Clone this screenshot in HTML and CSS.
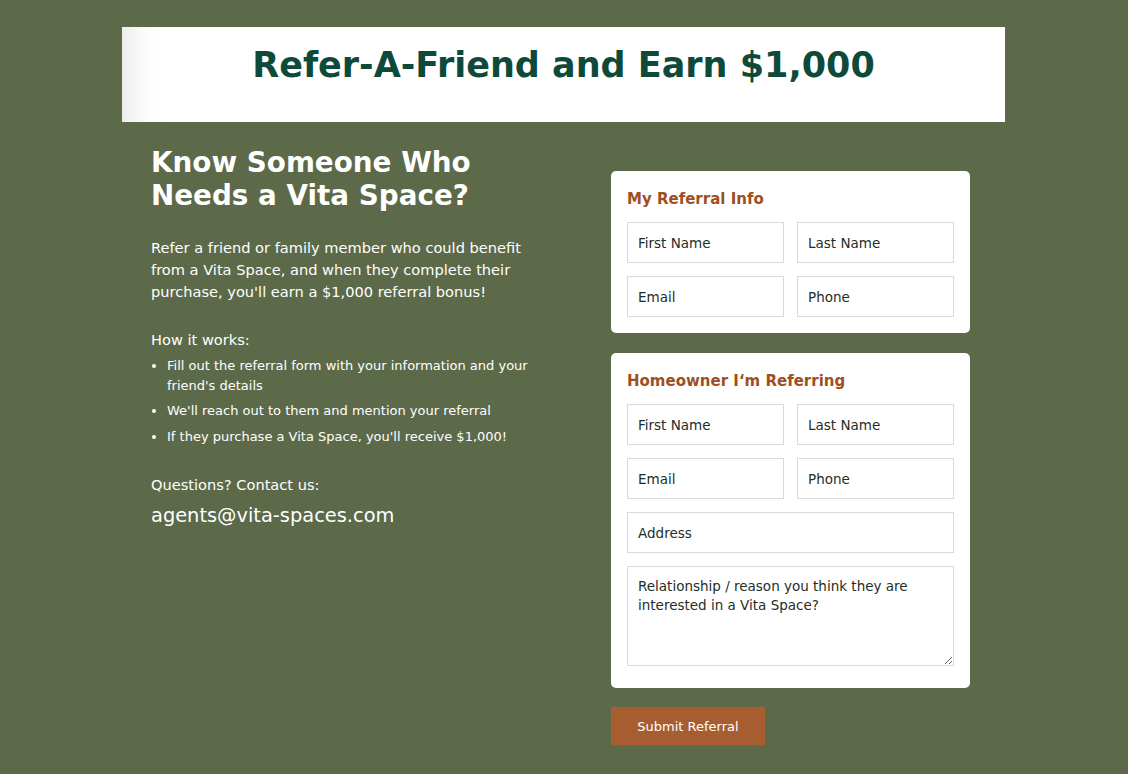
FILE: index.html
```html
<!DOCTYPE html>
<html>
<head>
<meta charset="utf-8">
<link rel="stylesheet" href="styles.css">
</head>
<body>
<div class="page">
  <header class="banner">
    <h1>Refer-A-Friend and Earn $1,000</h1>
  </header>
  <main class="content">
    <section class="intro">
      <h2>Know Someone Who Needs a Vita Space?</h2>
      <p class="lead">Refer a friend or family member who could benefit from a Vita Space, and when they complete their purchase, you'll earn a $1,000 referral bonus!</p>
      <p class="how">How it works:</p>
      <ul class="steps">
        <li>Fill out the referral form with your information and your friend's details</li>
        <li>We'll reach out to them and mention your referral</li>
        <li>If they purchase a Vita Space, you'll receive $1,000!</li>
      </ul>
      <p class="questions">Questions? Contact us:</p>
      <p class="email">agents@vita-spaces.com</p>
    </section>
    <form class="form">
      <div class="card">
        <h3>My Referral Info</h3>
        <div class="grid">
          <input class="field" type="text" placeholder="First Name">
          <input class="field" type="text" placeholder="Last Name">
          <input class="field" type="text" placeholder="Email">
          <input class="field" type="text" placeholder="Phone">
        </div>
      </div>
      <div class="card">
        <h3>Homeowner I‘m Referring</h3>
        <div class="grid">
          <input class="field" type="text" placeholder="First Name">
          <input class="field" type="text" placeholder="Last Name">
          <input class="field" type="text" placeholder="Email">
          <input class="field" type="text" placeholder="Phone">
          <input class="field wide" type="text" placeholder="Address">
          <textarea class="field wide area" placeholder="Relationship / reason you think they are interested in a Vita Space?"></textarea>
        </div>
      </div>
      <button class="submit" type="button">Submit Referral</button>
    </form>
  </main>
</div>
</body>
</html>
```

FILE: styles.css
```css
html, body {
  margin: 0;
  padding: 0;
  background: #5c6a4a;
}
body {
  font-family: "DejaVu Sans", "Noto Sans", sans-serif;
  color: #ffffff;
}
.page {
  width: 883px;
  margin: 0 0 0 122px;
  padding-top: 27px;
}
.banner {
  background: #ffffff;
  height: 95px;
  box-shadow: inset 34px 0 30px -26px rgba(0,0,0,0.10);
  display: flex;
  justify-content: center;
}
.banner h1 {
  margin: 14px 0 0 0;
  font-size: 35px;
  font-weight: 600;
  color: #0d4a3a;
  letter-spacing: 0;
  line-height: 48px;
}
.content {
  display: flex;
  justify-content: space-between;
  padding: 24px 35px 0 29px;
}
.intro {
  width: 400px;
}
.intro h2 {
  margin: 0;
  font-size: 27.8px;
  font-weight: 600;
  line-height: 33px;
  width: 340px;
}
.lead {
  margin: 25px 0 0 0;
  font-size: 14.6px;
  line-height: 22px;
}
.how {
  margin: 26px 0 0 0;
  font-size: 14.6px;
  line-height: 22px;
}
.steps {
  margin: 5px 0 0 0;
  padding-left: 16px;
  font-size: 13px;
  line-height: 20px;
}
.steps li {
  margin-bottom: 6px;
}
.steps li:first-child {
  margin-bottom: 5px;
}
.questions {
  margin: 27px 0 0 0;
  font-size: 14.6px;
  line-height: 22px;
}
.email {
  margin: 7px 0 0 0;
  font-size: 19.4px;
  line-height: 26px;
}
.form {
  width: 359px;
  margin-top: 25px;
  display: flex;
  flex-direction: column;
}
.card {
  background: #ffffff;
  border-radius: 5px;
  padding: 16px 16px 16px 16px;
  margin-bottom: 20px;
}
.card h3 {
  margin: 0 0 11px 0;
  font-size: 15px;
  font-weight: 600;
  line-height: 24px;
  color: #9e4f22;
}
.grid {
  display: grid;
  grid-template-columns: 157px 157px;
  column-gap: 13px;
  row-gap: 13px;
}
.field {
  box-sizing: border-box;
  height: 41px;
  border: 1px solid #d9d9d9;
  border-radius: 0;
  padding: 0 10px;
  font-family: "DejaVu Sans", "Noto Sans", sans-serif;
  font-size: 13.5px;
  color: #1e2e28;
  background: #fff;
  margin: 0;
  outline: none;
}
.field::placeholder {
  color: #1e2e28;
  opacity: 1;
}
.wide {
  grid-column: 1 / 3;
  width: 100%;
}
.area {
  height: 100px;
  padding: 10px 10px;
  line-height: 19px;
  resize: vertical;
  display: block;
  margin-bottom: 6px;
}
.submit {
  align-self: flex-start;
  width: 154px;
  height: 38px;
  margin-top: -1px;
  background: #a85d30;
  border: none;
  border-radius: 0;
  color: #ffffff;
  font-family: "DejaVu Sans", "Noto Sans", sans-serif;
  font-size: 13px;
  cursor: pointer;
}
```
